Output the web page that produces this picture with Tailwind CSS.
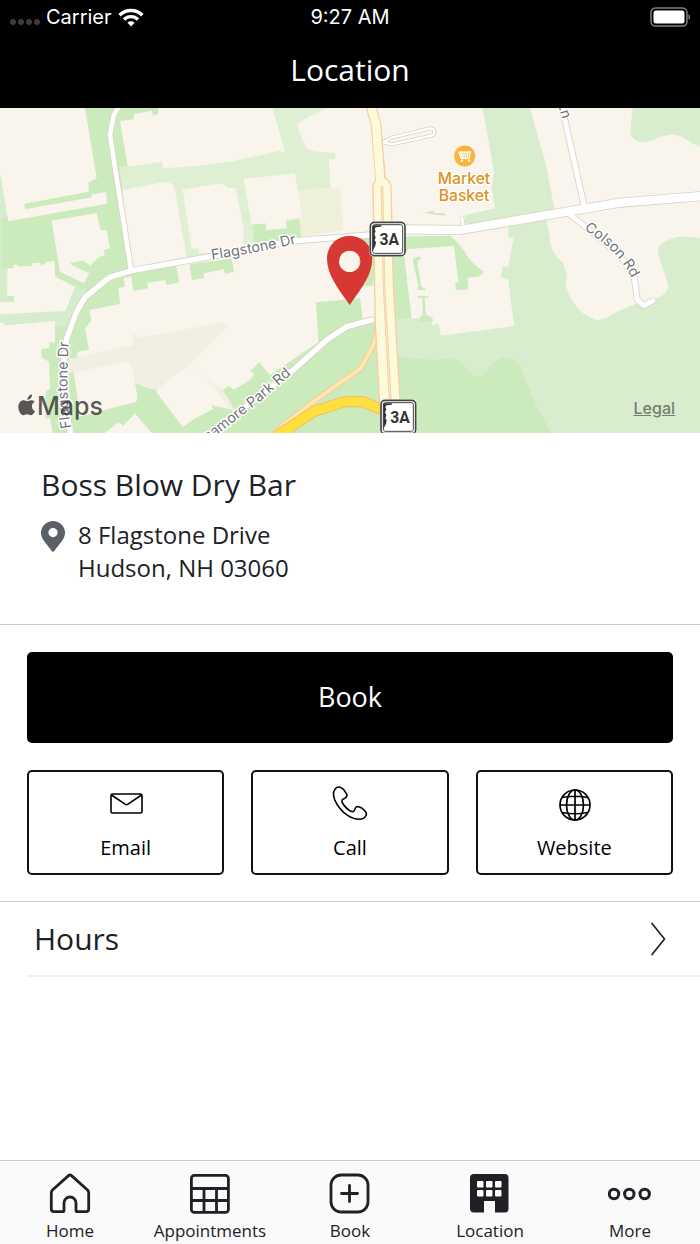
<!DOCTYPE html>
<html lang="en">
<head>
    <meta charset="UTF-8">
    <meta name="viewport" content="width=device-width, initial-scale=1.0">
    <title>Location - Boss Blow Dry Bar</title>
    <!-- Tailwind CSS (for styling) -->
    <script src="https://cdn.jsdelivr.net/npm/@tailwindcss/browser@4"></script>
</head>
<body class="flex min-h-screen flex-col bg-white font-['Open_Sans',sans-serif] text-[#202127]">
    <!-- Header -->
    <header class="bg-black text-white">
        <div class="grid h-[34px] grid-cols-3 items-center px-[10px] font-['Inter',sans-serif] text-[20px]">
            <div class="flex items-center gap-[6px]">
                <svg class="mt-[10px] h-[6px] w-[30px]" viewBox="0 0 30 6" fill="#3c3c3c" aria-hidden="true">
                    <circle cx="3" cy="3" r="3"/><circle cx="11" cy="3" r="3"/><circle cx="19" cy="3" r="3"/><circle cx="27" cy="3" r="3"/>
                </svg>
                <span>Carrier</span>
                <svg class="h-[19px] w-[26px]" viewBox="0 0 26 19" fill="none" stroke="#fff" aria-hidden="true">
                    <path d="M1.6 7.2a16.2 16.2 0 0 1 22.8 0" stroke-width="3.6"/>
                    <path d="M6 11.5a10 10 0 0 1 14 0" stroke-width="3.4"/>
                    <path d="M13 18.5l-3.6-3.8a5.2 5.2 0 0 1 7.2 0z" fill="#fff" stroke="none"/>
                </svg>
            </div>
            <div class="text-center">9:27 AM</div>
            <svg class="h-[20px] w-[41px] justify-self-end" viewBox="0 0 41 20" aria-hidden="true">
                <rect x="2" y="1" width="36" height="18" rx="4.500" fill="none" stroke="#808080" stroke-width="1.500"/>
                <rect x="4.500" y="3.500" width="31" height="13" rx="2.500" fill="#fff"/>
                <path d="M39.500 7c2 1 2 5 0 6z" fill="#808080"/>
            </svg>
        </div>
        <h1 class="flex h-[74px] items-center justify-center pb-[4px] text-[30px]">Location</h1>
    </header>

    <!-- Main Content -->
    <main class="flex-1">
        <!-- Map -->
        <section class="relative" aria-label="Map">
            <svg class="block w-full" viewBox="0 9 2100 975" font-family="Inter, sans-serif">
                <defs>
                    <path id="label-flagstone" d="M636 464Q770 444 900 413"/>
                    <path id="label-flagstone-south" d="M214 968Q195 880 207 700"/>
                    <path id="label-sycamore" d="M450 1136L662 982 780 890 874 808"/>
                    <path id="label-colson" d="M1752 374Q1860 440 1900 530"/>
                    <path id="label-ln" d="M1668 -24L1692 60"/>
                    <g id="shield">
                        <rect x="0" y="0" width="110" height="106" rx="15" fill="#fff"/>
                        <rect x="3" y="3" width="104" height="100" rx="12" fill="#fff" stroke="#464646" stroke-width="5"/>
                        <rect x="10" y="10" width="90" height="86" rx="6" fill="#fff" stroke="#464646" stroke-width="3"/>
                        <path d="M10 12h27l-2 4-16 2-3 6 3 6-4 8 4 10-3 9 4 6-2 10-7 14-1 3z" fill="#333"/>
                        <text x="60" y="70" text-anchor="middle" font-family="Roboto, sans-serif" font-weight="700" font-size="47" fill="#333">3A</text>
                    </g>
                </defs>
                <rect y="9" width="2100" height="975" fill="#f9f5ed"/>

                <!-- Pale parkland -->
                <g fill="#d8edcd">
                    <path d="M1190 645L1290 635 1297 660 1315 655 1323 692 1542 663 1525 525 1502 515 1508 483 1525 485 1540 400 1525 398V365L1480 375 1390 362 1395 330 1485 310 1475 250 1482 200 1448 9H1590L1638 180 1663 310 1640 345 1651 410Q1655 445 1690 475L1700 510 1698 545Q1730 630 1790 645 1815 643 1850 620L1905 597 1960 582Q2010 570 2003 535L1985 480Q1966 430 1980 420 2020 392 2055 395L2100 398V984H1190z"/>
                    <path d="M1898 9L1890 85Q1905 125 1960 105 2000 85 2030 90 2060 100 2070 112L2100 126V9z"/>
                </g>
                <path d="M355 180L383 185 485 170 490 190 600 182 700 168 835 138 855 140 817 9H985Q900 45 893 60 893 75 920 130 935 143 1006 143V162L986 163 992 248 895 256 905 395 398 490z" fill="#dff0d2"/>
                <path d="M895 256L1022 248 1030 375 905 395z" fill="#eef0d9"/>

                <!-- Green areas -->
                <g fill="#cbebbc">
                    <path d="M0 205L255 9H475L474 28 460 32 456 18 402 27V43L360 48 383 185 358 182 398 498 528 482 538 532 500 540 496 525 442 533 444 550 400 558 394 515 372 518 374 545 355 550 360 597 268 615 274 645 255 672 267 735 232 740V760H208V800L222 803 242 930 410 890 404 832 470 855 548 965 585 940 640 912 632 900 675 860 700 875 700 984H158L150 940H135L137 860 150 850 147 770 125 758 124 732 148 728V712H162L165 655 0 592z"/>
                    <path d="M568 478L695 460 702 500 675 508 672 492 612 505V520L575 525z"/>
                    <path d="M757 360L798 355 800 375 860 365 857 350 897 342 903 395 762 415z"/>
                    <path d="M990 400L1125 395 1120 543H1078L1080 500z"/>
                    <path d="M948 592L1080 580 1088 640 1115 650 1140 660V500H1190V755L1310 765Q1370 745 1400 795 1440 835 1470 785 1520 730 1560 785 1580 830 1610 905L1655 984H600V945L638 905 630 895 675 850 688 842 700 855 750 825 763 808 750 798 778 772 810 810 955 712z"/>
                    <path d="M1150 395L1350 392Q1380 415 1400 450 1410 470 1452 502L1438 514 1402 518 1405 553 1368 556 1365 535 1375 530 1362 423 1225 432 1212 450 1235 640 1190 645z"/>
                    <path d="M1239 470Q1235 455 1262 455V463Q1250 465 1255 490L1264 545 1275 550V556L1250 555 1256 546z"/>
                    <path d="M1254 572L1283 573V579H1274L1278 628 1298 640V650H1258V640L1268 630 1267 579H1254z"/>
                    <path d="M1270 324L1298 317 1305 324 1335 325V332L1295 328z"/>
                </g>
                <path d="M0 205L25 335Q8 335 6 350L5 480 22 495V592H0z" fill="#d5edcc"/>
                <path d="M0 628L200 618 228 540 262 560 195 668 165 662V648L12 662V655H0z" fill="#d5edcc"/>

                <!-- Building lots -->
                <g fill="#f9f5ed">
                    <path d="M0 9H255L290 220 265 232 267 260 73 296 75 313 275 277V268L318 262 322 296 25 349 0 205z"/>
                    <path d="M155 347L290 324 302 375H320L330 430 312 435 314 450Q290 455 272 482L250 467 212 473 215 480 268 505 252 535 180 500z"/>
                    <path d="M22 490H40V480H54V485L97 482V475L120 473 122 480 135 478V472L163 468 166 515 225 545 197 618 0 628V592L42 590V573H22z"/>
                    <path d="M0 655H12V662L165 648V712H0z"/>
                    <path d="M367 255L490 232Q520 230 525 255L560 455 395 488z"/>
                    <path d="M548 254L650 237Q670 235 685 250L708 250 732 375 728 440 598 445 596 430H575z"/>
                    <path d="M730 223L885 205 907 338 857 345 860 370 800 375 798 355 755 358z"/>
                    <path d="M530 480L568 475 575 525 538 532z"/>
                    <path d="M222 803L370 772Q390 770 400 810L412 870Q412 888 400 892L240 935z"/>
                    <path d="M468 860L580 768 700 915 632 900 640 912 585 940 548 965z"/>
                    <path d="M315 984L355 952 370 962 405 925 455 984z"/>
                </g>
                <path d="M208 762L400 720 398 690 412 685 415 698 670 652 685 662 580 768 470 855Q430 850 405 830 395 770 375 770L222 803H208z" fill="#f1efe2"/>
                <path d="M582 768L640 838 665 850 705 915 690 912 635 840z" fill="#f1efe2"/>

                <!-- Minor roads -->
                <g fill="none" stroke-linejoin="round" stroke-linecap="round">
                    <g stroke="#d9d1c6">
                        <path d="M358 0L340 35 330 90 393 495" stroke-width="19"/>
                        <path d="M215 1000L195 900 192 760 200 700 230 620 255 577 328 517 395 497 630 455 890 407 1130 388" stroke-width="21"/>
                        <path d="M1680 -20L1752 300M1705 325L1760 368 1860 450 1903 520 1912 585 1932 602 1959 587" stroke-width="20"/>
                        <path d="M1385 338L1392 370" stroke-width="13"/>
                        <path d="M600 1010L880 795 980 705 1040 665 1115 645" stroke-width="21"/>
                        <path d="M1200 373L1380 375 1860 293 2110 273" stroke-width="30"/>
                        <path d="M1150 112L1175 98 1290 70Q1303 70 1303 82 1303 90 1295 92L1175 118z" stroke-width="12"/>
                    </g>
                    <g stroke="#fff">
                        <path d="M358 0L340 35 330 90 393 495" stroke-width="14"/>
                        <path d="M215 1000L195 900 192 760 200 700 230 620 255 577 328 517 395 497 630 455 890 407 1130 388" stroke-width="16"/>
                        <path d="M1680 -20L1752 300M1705 325L1760 368 1860 450 1903 520 1912 585 1932 602 1959 587" stroke-width="15"/>
                        <path d="M1385 338L1392 370" stroke-width="9"/>
                        <path d="M600 1010L880 795 980 705 1040 665 1115 645" stroke-width="16"/>
                        <path d="M1200 373L1380 375 1860 293 2110 273" stroke-width="25"/>
                        <path d="M1150 112L1175 98 1290 70Q1303 70 1303 82 1303 90 1295 92L1175 118z" stroke-width="7"/>
                    </g>
                </g>

                <!-- Highway 3A and its ramps -->
                <g fill="none" stroke-linejoin="round">
                    <path d="M1133 665Q1128 700 1118 725L1082 790 940 890 825 980" stroke="#f4cf9a" stroke-width="17"/>
                    <path d="M1133 665Q1128 700 1118 725L1082 790 940 890 825 980" stroke="#fee7b0" stroke-width="11"/>
                    <path d="M820 1000L940 920 1035 890H1090L1160 920" stroke="#f3bd6c" stroke-width="34"/>
                    <path d="M820 1000L940 920 1035 890H1090L1160 920" stroke="#ffe03d" stroke-width="28"/>
                    <path d="M1112 0L1128 60 1142 225" stroke="#f5cfa2" stroke-width="32"/>
                    <path d="M1119 245Q1119 235 1130 220H1158Q1172 232 1173 245L1180 540 1206 984H1144L1126 660z" fill="#fdfadb" stroke="#f5cfa2" stroke-width="4"/>
                    <path d="M1110 -10L1128 60 1142 240" stroke="#fdfadb" stroke-width="25"/>
                    <path d="M1146 243L1152 540 1176 984" stroke="#f5cfa2" stroke-width="8"/>
                    <path d="M1146 243L1152 540 1176 984" stroke="#fbeed6" stroke-width="2"/>
                </g>

                <!-- Road names -->
                <g font-size="43" font-weight="400" fill="#727276" stroke="#fff" stroke-width="9" stroke-linejoin="round" paint-order="stroke">
                    <text><textPath href="#label-flagstone">Flagstone Dr</textPath></text>
                    <text><textPath href="#label-flagstone-south">Flagstone Dr</textPath></text>
                    <text text-anchor="end"><textPath href="#label-sycamore" startOffset="100%">Sycamore Park Rd</textPath></text>
                    <text><textPath href="#label-colson">Colson Rd</textPath></text>
                    <text text-anchor="end"><textPath href="#label-ln" startOffset="80%">Ln</textPath></text>
                </g>

                <!-- Shop marker -->
                <circle cx="1394" cy="153" r="33" fill="#f7b53c" stroke="#fff" stroke-width="2"/>
                <path d="M1373 140l3 1 7 20h28" fill="none" stroke="#fff" stroke-width="3"/>
                <path d="M1378 139h36l-5 20h-25z" fill="#fff"/>
                <path d="M1382 146h30M1384 153h26M1391 139l2 20M1399 139v20M1407 139l-2 20" stroke="#f7b53c" stroke-width="1.500"/>
                <circle cx="1386" cy="167" r="3.500" fill="#fff"/><circle cx="1407" cy="167" r="3.500" fill="#fff"/>
                <g font-size="47" font-weight="500" fill="#de9320" stroke="#fff" stroke-width="8" stroke-linejoin="round" paint-order="stroke" text-anchor="middle">
                    <text x="1392" y="238">Market</text>
                    <text x="1392" y="289">Basket</text>
                </g>

                <!-- Red pin -->
                <path d="M1049 600C1010 545 981 508 981 460A68 68 0 0 1 1117 460C1117 508 1088 545 1049 600z" fill="#d83833"/>
                <circle cx="1049" cy="469" r="32" fill="#f9f5ed"/>
                <path d="M1076 452q8 17 0 34z" fill="#cbebbc"/>

                <use href="#shield" x="1108" y="349"/>
                <use href="#shield" x="1140" y="883"/>

                <!-- Map credit -->
                <g fill="#30302e" fill-opacity="0.800">
                    <path d="M81 884c3-10 9-15 15-16 1 9-6 17-15 16zM104 890c-7 4-9 10-8 16 1 6 4 10 9 13-4 8-9 12-13 12-4 0-6-3-11-3s-7 3-11 3c-7 0-15-13-15-25 0-13 8-20 16-20 5 0 8 3 11 3s7-3 12-3c4 0 8 2 10 4z"/>
                    <text x="111" y="930" font-size="75" font-weight="500">Maps</text>
                </g>
            </svg>
            <a href="#legal" class="absolute right-[25px] bottom-[13px] font-['Inter',sans-serif] text-[16px] font-medium text-[#747d70] underline">Legal</a>
        </section>

        <!-- Business Details -->
        <section class="border-b border-[#cccccc] px-[41px] pt-[30px] pb-[40px]">
            <h2 class="text-[30px] leading-[44px]">Boss Blow Dry Bar</h2>
            <div class="mt-[11px] flex gap-[13px]">
                <svg class="mt-[3px] h-[31px] w-[24px]" viewBox="0 0 24 31" aria-hidden="true">
                    <path fill-rule="evenodd" d="M12 0A12 12 0 0 1 24 12C24 18 19 22 13.500 29.800Q12 31.600 10.500 29.800C5 22 0 18 0 12A12 12 0 0 1 12 0zM12 7a4.600 4.600 0 1 0 0 9.200A4.600 4.600 0 0 0 12 7z" fill="#5b5f68"/>
                </svg>
                <address class="text-[24px] leading-[33px] not-italic">8 Flagstone Drive<br>Hudson, NH 03060</address>
            </div>
        </section>

        <!-- Actions -->
        <section class="border-b border-[#cccccc] px-[27px] pt-[27px] pb-[26px]">
            <button type="button" class="h-[91px] w-full rounded-[5px] bg-black text-[27px] text-white">Book</button>
            <div class="mt-[27px] grid grid-cols-3 gap-[27px] text-black">
                <button type="button" class="flex h-[105px] flex-col items-center rounded-[5px] border-2 border-[#111111] pt-[13px]">
                    <svg class="h-[38px] w-[38px]" viewBox="0 0 38 38" fill="none" stroke="#000" stroke-width="1.600" stroke-linejoin="round" aria-hidden="true">
                        <rect x="4" y="9" width="31" height="19" rx="1.500"/><path d="M4.500 10L18 19.200q1.500 1 3 0L34.500 10"/>
                    </svg>
                    <span class="mt-[10px] text-[20px] leading-[30px]">Email</span>
                </button>
                <button type="button" class="flex h-[105px] flex-col items-center rounded-[5px] border-2 border-[#111111] pt-[13px]">
                    <svg class="h-[38px] w-[38px]" viewBox="0 0 38 38" fill="none" stroke="#000" stroke-width="1.600" stroke-linejoin="round" aria-hidden="true">
                        <path d="M3 6C4.500 3 7 1.700 9 2.200 11.500 3 14.500 6.800 15.800 9.500 16.500 12 14 13.500 12 14.200 10.800 15 10.500 16.500 11.500 18 13.500 21.500 17.500 25 20.500 26.600 22 27 23 26.300 23.600 25 24 23.500 24.800 21.800 26 21.500 29 21.600 33 24.600 35 27.300 36 29.500 34.500 32 32 33.600 28 35 22.500 34 17 30.600 11.500 27.500 6 20.500 3.800 15 2.500 11.500 2 8.500 3 6z"/>
                    </svg>
                    <span class="mt-[10px] text-[20px] leading-[30px]">Call</span>
                </button>
                <button type="button" class="flex h-[105px] flex-col items-center rounded-[5px] border-2 border-[#111111] pt-[13px]">
                    <svg class="h-[38px] w-[38px]" viewBox="0 0 38 38" fill="none" stroke="#000" stroke-width="1.700" aria-hidden="true">
                        <circle cx="20" cy="20" r="15"/><ellipse cx="20" cy="20" rx="8.500" ry="15"/><path d="M20 5v30M5 20h30M7.500 12.500q12.500-2.500 25 0M7.500 27.500q12.500 2.500 25 0"/>
                    </svg>
                    <span class="mt-[10px] text-[20px] leading-[30px]">Website</span>
                </button>
            </div>
        </section>

        <!-- Hours -->
        <section class="pl-[27px]">
            <button type="button" class="flex h-[75px] w-full items-center justify-between border-b-2 border-[#efeff0] pr-[34px] pl-[7px] text-[30px]">
                <span>Hours</span>
                <svg class="h-[34px] w-[16px]" viewBox="0 0 16 34" fill="none" stroke="#202127" stroke-width="1.700" stroke-linecap="round" stroke-linejoin="round" aria-hidden="true"><path d="M2 1.500L14.500 17 2 32.500"/></svg>
            </button>
        </section>
    </main>

    <!-- Tab Bar -->
    <nav class="grid h-[84px] grid-cols-5 border-t border-[#cccccc] bg-[#fafafa] text-[17px] leading-[24px]">
        <a href="#home" class="flex flex-col items-center pt-[12px]">
            <svg class="h-[42px] w-[42px]" viewBox="0 0 42 42" fill="none" stroke="#202127" stroke-width="2.800" stroke-linejoin="round" aria-hidden="true">
                <path d="M19.500 2.600Q21 1.400 22.500 2.600L38.500 17Q39.700 18.200 39.700 20V36Q39.700 38.700 37 38.700H28.500Q27 38.700 27 37.200V30A6 6 0 0 0 15 30V37.200Q15 38.700 13.500 38.700H5Q2.300 38.700 2.300 36V20Q2.300 18.200 3.500 17z"/>
            </svg>
            <span class="mt-[4px]">Home</span>
        </a>
        <a href="#appointments" class="flex flex-col items-center pt-[12px]">
            <svg class="h-[42px] w-[42px]" viewBox="0 0 42 42" fill="none" stroke="#202127" stroke-width="2.800" aria-hidden="true">
                <rect x="2.400" y="2.400" width="37" height="37" rx="3"/><path d="M2 15.500h38M2 27.500h38M15 15.500v24M27.500 15.500v24"/>
            </svg>
            <span class="mt-[4px]">Appointments</span>
        </a>
        <a href="#book" class="flex flex-col items-center pt-[12px]">
            <svg class="h-[42px] w-[42px]" viewBox="0 0 42 42" fill="none" stroke="#202127" stroke-width="2.800" stroke-linecap="round" aria-hidden="true">
                <rect x="2" y="2" width="37" height="37" rx="10"/><path d="M20.500 12.500v16M12.500 20.500h16"/>
            </svg>
            <span class="mt-[4px]">Book</span>
        </a>
        <a href="#location" class="flex flex-col items-center pt-[12px]" aria-current="page">
            <svg class="h-[42px] w-[42px]" viewBox="0 0 42 42" aria-hidden="true">
                <path d="M5 1H36Q39.500 1 39.500 5V35.500Q39.500 39.500 36 39.500H26V28H15V39.500H5Q1 39.500 1 35.500V5Q1 1 5 1z" fill="#202127"/>
                <g fill="#fff">
                    <rect x="8" y="8" width="6.500" height="6.500" rx="1"/><rect x="17" y="8" width="6.500" height="6.500" rx="1"/><rect x="26" y="8" width="6.500" height="6.500" rx="1"/>
                    <rect x="8" y="17" width="6.500" height="6.500" rx="1"/><rect x="17" y="17" width="6.500" height="6.500" rx="1"/><rect x="26" y="17" width="6.500" height="6.500" rx="1"/>
                </g>
            </svg>
            <span class="mt-[4px]">Location</span>
        </a>
        <a href="#more" class="flex flex-col items-center pt-[12px]">
            <svg class="h-[42px] w-[44px]" viewBox="0 0 44 42" fill="none" stroke="#202127" stroke-width="3" aria-hidden="true">
                <circle cx="6" cy="21" r="4.700"/><circle cx="21.300" cy="21" r="4.700"/><circle cx="36.700" cy="21" r="4.700"/>
            </svg>
            <span class="mt-[4px]">More</span>
        </a>
    </nav>
</body>
</html>
